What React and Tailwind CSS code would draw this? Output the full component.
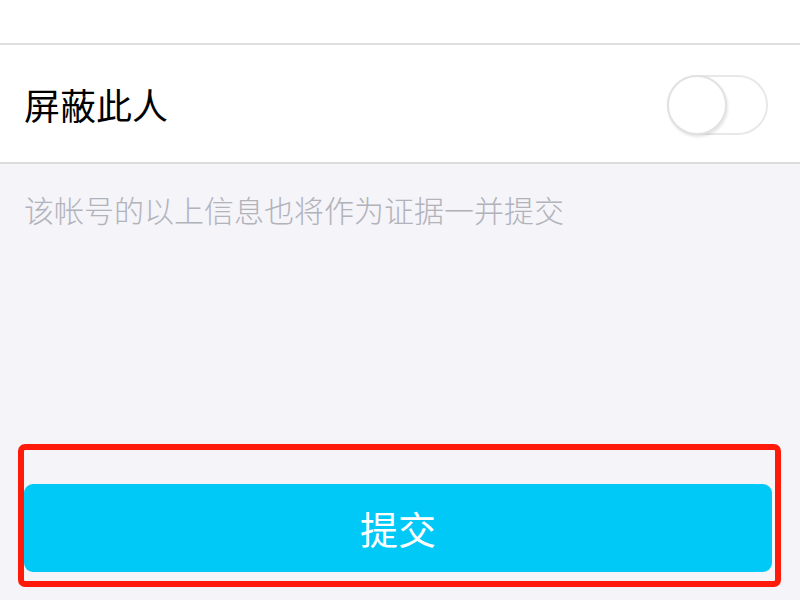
export default function App() {
  return (
    <div
      className="w-[800px] h-[600px] overflow-hidden bg-[#f4f4f9] flex flex-col"
      style={{ fontFamily: '"Noto Sans CJK SC", "Noto Sans", sans-serif' }}
    >
      <div className="h-[45px] bg-white border-b-2 border-[#dfdfdf]" />
      <div className="h-[119px] bg-white border-b-2 border-[#dcdcdc] flex items-center justify-between pl-[24px] pr-[32px]">
        <span className="text-[36px] leading-none text-black">屏蔽此人</span>
        <div className="mt-[2px] w-[101px] h-[60px] rounded-full border-2 border-[#e8e8e8] bg-white relative">
          <div className="absolute left-[-2px] top-[-2px] w-[60px] h-[60px] rounded-full bg-white border-2 border-[#e2e2e2] shadow-[1px_2px_3px_rgba(0,0,0,0.1)]" />
        </div>
      </div>
      <div className="pl-[24px] pt-[30px]">
        <span className="text-[30px] leading-none text-[#b2b2ba] font-light">该帐号的以上信息也将作为证据一并提交</span>
      </div>
      <div className="flex-1" />
      <div className="ml-[18px] mr-[19px] mb-[13px] h-[143px] border-[6px] border-[#ff1a0a] rounded-[7px] pt-[34px] pr-[3px] pb-[9px]">
        <div className="h-[88px] bg-[#00c8f7] rounded-[9px] flex items-center justify-center">
          <span className="text-[38px] leading-none text-white">提交</span>
        </div>
      </div>
    </div>
  );
}
